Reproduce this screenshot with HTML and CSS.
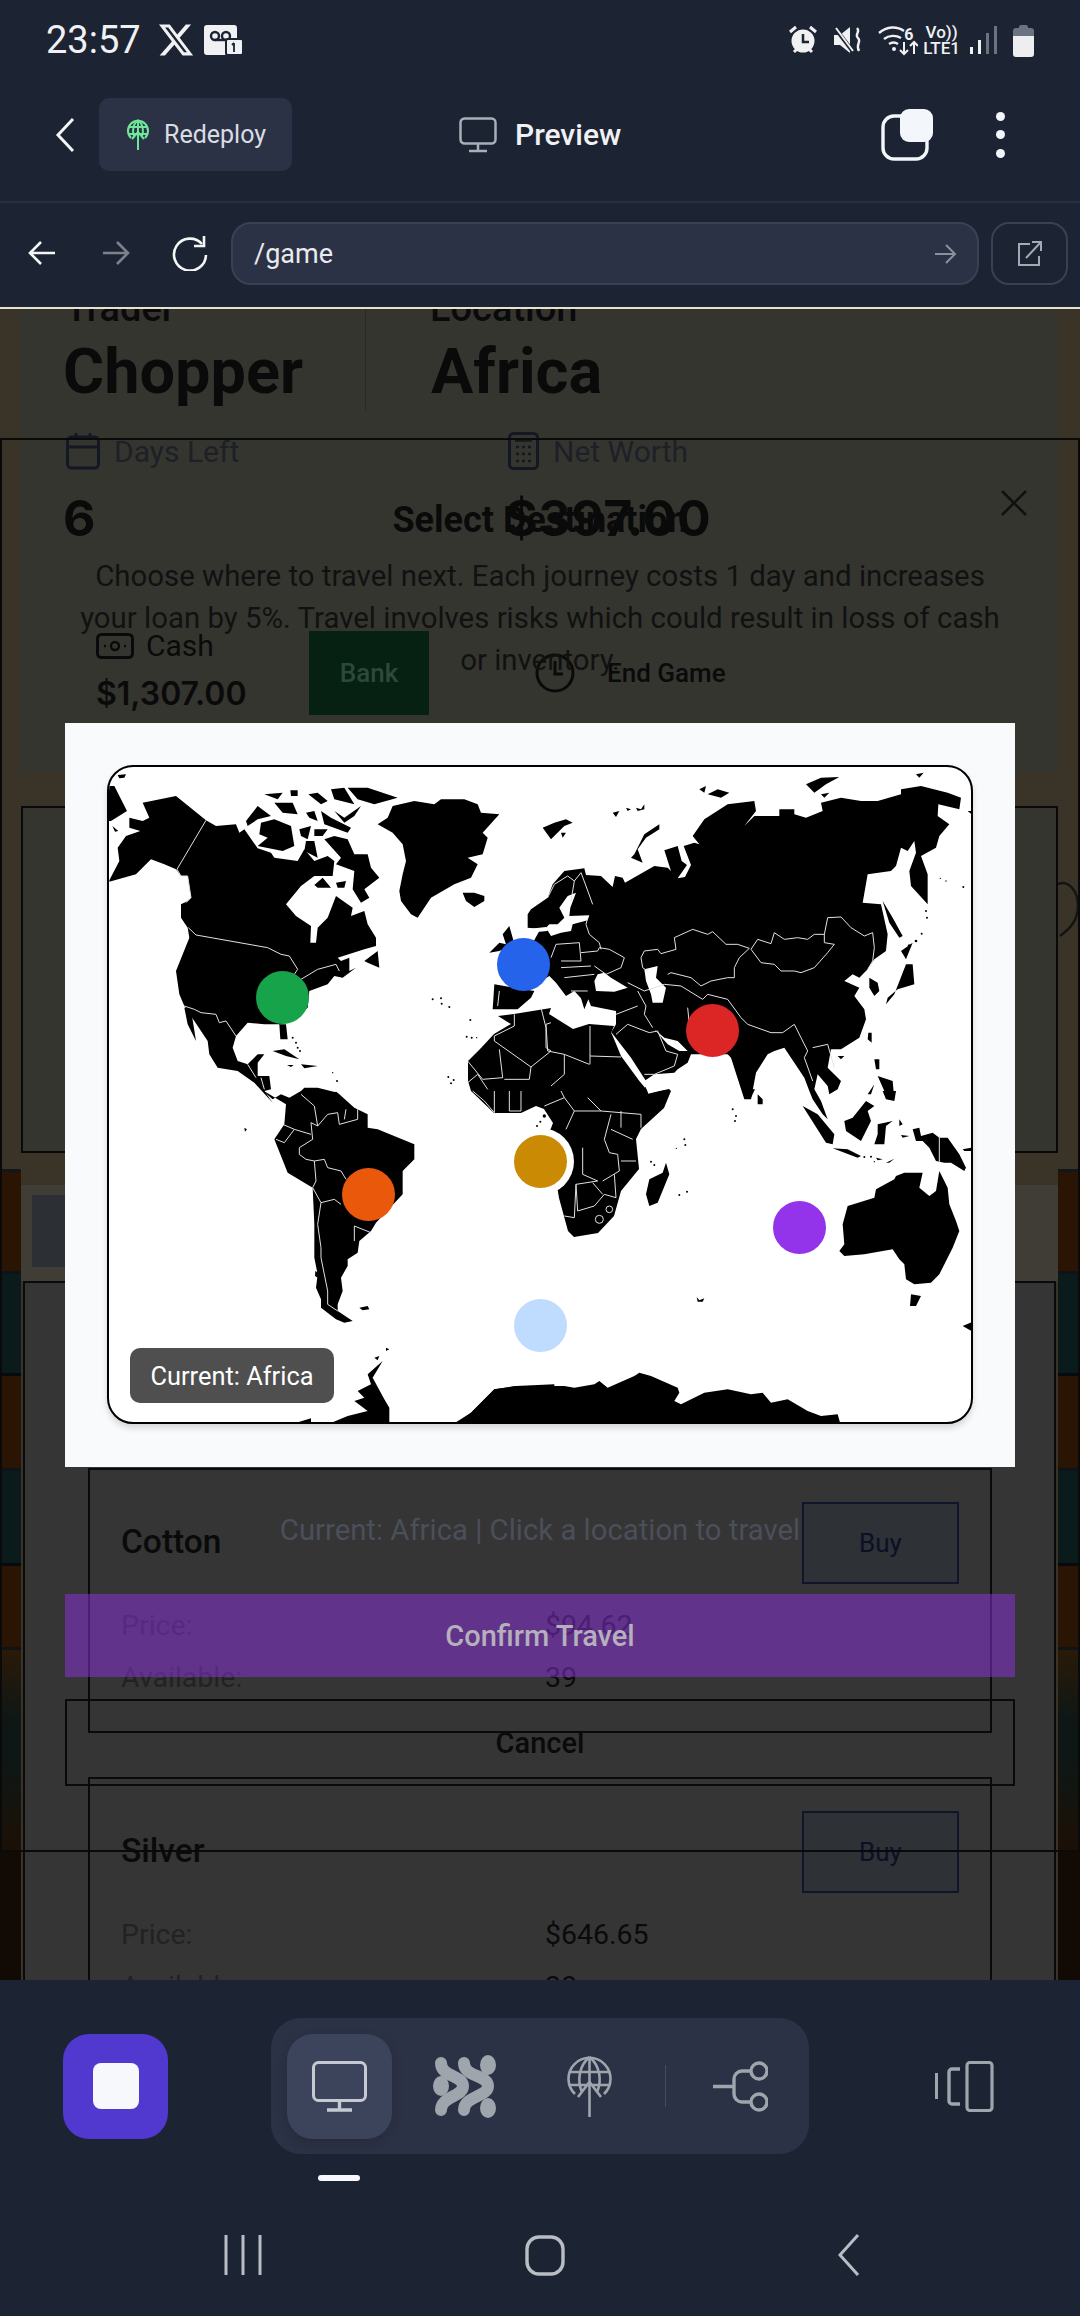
FILE: index.html
```html
<!DOCTYPE html>
<html lang="en">
<head>
    <meta charset="UTF-8">
    <title>Preview</title>
    <link rel="stylesheet" href="styles.css">
</head>
<body>
<div class="status">
    <span class="time">23:57</span>
    <svg class="x-logo" viewBox="0 0 24 24"><path d="M18.244 2.25h3.308l-7.227 8.26 8.502 11.24H16.17l-5.214-6.817L4.99 21.75H1.68l7.73-8.835L1.254 2.25H8.08l4.713 6.231zm-1.161 17.52h1.833L7.084 4.126H5.117z"/></svg>
    <svg class="vm" viewBox="0 0 39 30"><rect x="0" y="0" width="33" height="30" rx="3" fill="#f1f1f3"/><circle cx="11" cy="11" r="4" fill="none" stroke="#1c2333" stroke-width="2.4"/><circle cx="22" cy="11" r="4" fill="none" stroke="#1c2333" stroke-width="2.4"/><path d="M11 15h11" stroke="#1c2333" stroke-width="2.4"/><rect x="22" y="14" width="17" height="16" rx="2" fill="#f1f1f3" stroke="#1c2333" stroke-width="2"/><path d="M30 18v9M28 20l2-2" stroke="#1c2333" stroke-width="1.8" fill="none"/></svg>
    <div class="status-right">
        <svg class="st-alarm" viewBox="0 0 30 30"><circle cx="15" cy="16" r="11.5" fill="#f1f1f3"/><path d="M15 9v8h6" stroke="#1c2333" stroke-width="2.5" fill="none"/><path d="M2 7l6-5M28 7l-6-5M6 27l3-3M24 27l-3-3" stroke="#f1f1f3" stroke-width="3"/></svg>
        <svg class="st-mute" viewBox="0 0 30 30"><path d="M1 10h6l10-8v26L7 20H1z" fill="#f1f1f3"/><path d="M2 3l19 25" stroke="#1c2333" stroke-width="4"/><path d="M3 3l17 23" stroke="#f1f1f3" stroke-width="2"/><path d="M24 3c4 4-3 6 1 10s-3 6 1 13" stroke="#f1f1f3" stroke-width="2.4" fill="none"/></svg>
        <svg class="st-wifi" viewBox="0 0 40 32"><path d="M1 9c8-7 18-7 25-2M6 15c5-4 12-4 17-1M11 20c3-2 6-2 9 0" stroke="#f1f1f3" stroke-width="2.4" fill="none"/><circle cx="16" cy="25" r="2" fill="#f1f1f3"/><path d="M26 18v12M22 26l4 4 4-4M36 30V18M32 22l4-4 4 4" stroke="#f1f1f3" stroke-width="2" fill="none"/></svg>
        <span class="st-six">6</span>
        <span class="st-net"><span>Vo))</span><span>LTE1</span></span>
        <svg class="st-bars" viewBox="0 0 28 30"><rect x="0" y="22" width="3" height="7" fill="#f1f1f3"/><rect x="8" y="15" width="3" height="14" fill="#f1f1f3"/><rect x="16" y="8" width="3" height="21" fill="#6b7280"/><rect x="24" y="1" width="3" height="28" fill="#6b7280"/></svg>
        <svg class="st-batt" viewBox="0 0 21 33"><path d="M6 3a2 2 0 0 1 2-2h5a2 2 0 0 1 2 2v1h3a3 3 0 0 1 3 3v5H0V7a3 3 0 0 1 3-3h3z" fill="#6b7280"/><path d="M0 12h21v18a3 3 0 0 1-3 3H3a3 3 0 0 1-3-3z" fill="#eeeef0"/></svg>
    </div>
</div>

<div class="topbar">
    <svg class="chev" viewBox="0 0 20 36"><path d="M18 2L3 18l15 16" fill="none" stroke="#f4f5f7" stroke-width="3"/></svg>
    <div class="redeploy">
        <svg class="globe-green" viewBox="0 0 24 32"><path d="M5 19A10 10 0 1 1 19 19" fill="none" stroke="#6ee79a" stroke-width="2"/><path d="M2 8h20M3 15h18M12 1v30M12 1c-5 4-6 11-4 16M12 1c5 4 6 11 4 16M6 20l6-7 6 7" fill="none" stroke="#6ee79a" stroke-width="2"/></svg>
        <span>Redeploy</span>
    </div>
    <div class="preview">
        <svg class="mon" viewBox="0 0 38 36"><rect x="1.5" y="1.5" width="35" height="25" rx="4" fill="none" stroke="#a9afb8" stroke-width="2.5"/><path d="M19 27v7M10 34h18" stroke="#a9afb8" stroke-width="2.5"/></svg>
        <span>Preview</span>
    </div>
    <div class="top-right">
        <svg class="copy" viewBox="0 0 52 52"><rect x="2" y="7" width="44" height="43" rx="11" fill="none" stroke="#f3f6fb" stroke-width="3.4"/><rect x="19" y="0" width="33" height="33" rx="9" fill="#f3f6fb"/></svg>
        <div class="dots"><i></i><i></i><i></i></div>
    </div>
</div>

<div class="navbar">
    <svg class="arr a1" viewBox="0 0 28 26"><path d="M27 13H2M13 2L2 13l11 11" fill="none" stroke="#f4f5f7" stroke-width="2.6"/></svg>
    <svg class="arr a2" viewBox="0 0 28 26"><path d="M1 13h25M15 2l11 11-11 11" fill="none" stroke="#7d828d" stroke-width="2.6"/></svg>
    <svg class="reload" viewBox="0 0 38 36"><path d="M32 9a16 16 0 1 0 4 11" fill="none" stroke="#f4f5f7" stroke-width="2.6"/><path d="M34 1v10H24" fill="none" stroke="#f4f5f7" stroke-width="2.6"/></svg>
    <div class="url">
        <span>/game</span>
        <svg class="url-go" viewBox="0 0 22 22"><path d="M0 11h20M11 2l9 9-9 9" fill="none" stroke="#8b909b" stroke-width="2"/></svg>
    </div>
    <div class="ext">
        <svg viewBox="0 0 26 26"><path d="M13 4H2v21h20v-9" fill="none" stroke="#a4a9b2" stroke-width="2"/><path d="M9 18L24 2M15 2h9v9" fill="none" stroke="#a4a9b2" stroke-width="2"/></svg>
    </div>
</div>

<div class="stage">
    <div class="shelf">
        <i class="s-olive"></i><i class="s-brown h1"></i><i class="s-teal h2"></i><i class="s-brown h3"></i><i class="s-teal h4"></i><i class="s-brown h5"></i><i class="s-mix"></i><i class="s-last"></i>
    </div>

    <div class="page">
        <div class="card-main">
            <div class="head">
                <div class="head-a">
                    <div class="head-label">Trader</div>
                    <div class="head-val">Chopper</div>
                </div>
                <div class="head-b">
                    <div class="head-label">Location</div>
                    <div class="head-val">Africa</div>
                </div>
            </div>
            <div class="stats">
                <div>
                    <div class="stat-label">
                        <svg class="ic-cal" viewBox="0 0 34 38"><rect x="1.5" y="5" width="31" height="31" rx="4" fill="none" stroke="#141822" stroke-width="3"/><path d="M1 15h32M10 1v7M24 1v7" stroke="#141822" stroke-width="3"/></svg>
                        Days Left
                    </div>
                    <div class="stat-val">6</div>
                </div>
                <div>
                    <div class="stat-label">
                        <svg class="ic-calc" viewBox="0 0 31 38"><rect x="1.5" y="1.5" width="28" height="35" rx="4" fill="none" stroke="#141822" stroke-width="3"/><path d="M7 8h17" stroke="#141822" stroke-width="3.5"/><path d="M8 15h3M14 15h3M20 15h3M8 22h3M14 22h3M20 22h3M8 29h3M14 29h3M20 29h3" stroke="#141822" stroke-width="2.5"/></svg>
                        Net Worth
                    </div>
                    <div class="stat-val">$397.00</div>
                </div>
            </div>
            <div class="actions">
                <div class="cash">
                    <div class="cash-label">
                        <svg class="ic-cash" viewBox="0 0 38 26"><rect x="1.5" y="1.5" width="35" height="23" rx="4" fill="none" stroke="#0a0a0a" stroke-width="3"/><circle cx="19" cy="13" r="4" fill="none" stroke="#0a0a0a" stroke-width="2.4"/><path d="M8 13h2M28 13h2" stroke="#0a0a0a" stroke-width="2.4"/></svg>
                        Cash
                    </div>
                    <div class="cash-val">$1,307.00</div>
                </div>
                <div class="bank">Bank</div>
                <div class="endgame">
                    <svg class="ic-clock" viewBox="0 0 40 40"><circle cx="20" cy="20" r="18" fill="none" stroke="#0a0a0a" stroke-width="3"/><path d="M20 8v13h8" fill="none" stroke="#0a0a0a" stroke-width="3"/></svg>
                    End Game
                </div>
            </div>
        </div>

        <div class="card-mid"></div>

        <div class="band"><div class="band-in"></div></div>

        <div class="market">
            <div class="item">
                <div class="item-head">
                    <span class="item-name">Cotton</span>
                    <span class="buy">Buy</span>
                </div>
                <div class="item-rows">
                    <span class="k">Price:</span><span class="v">$94.62</span>
                    <span class="k">Available:</span><span class="v">39</span>
                </div>
            </div>
            <div class="item">
                <div class="item-head">
                    <span class="item-name">Silver</span>
                    <span class="buy">Buy</span>
                </div>
                <div class="item-rows">
                    <span class="k">Price:</span><span class="v">$646.65</span>
                    <span class="k">Available:</span><span class="v">38</span>
                </div>
            </div>
        </div>
    </div>

    <div class="shelf shelf-r">
        <i class="s-olive"></i><i class="s-brown h1"></i><i class="s-teal h2"></i><i class="s-brown h3"></i><i class="s-teal h4"></i><i class="s-brown h5"></i><i class="s-mix"></i><i class="s-last"></i>
    </div>

    <svg class="deco" viewBox="0 0 22 80"><path d="M0 14C10 10 20 20 20 36S10 60 2 66" fill="none" stroke="#141412" stroke-width="2.5"/></svg>

    <div class="modal">
        <svg class="close" viewBox="0 0 28 26"><path d="M2 1l24 24M26 1L2 25" fill="none" stroke="#111" stroke-width="2.6"/></svg>
        <h2 class="modal-title">Select Destination</h2>
        <p class="modal-desc">Choose where to travel next. Each journey costs 1 day and increases your loan by 5%. Travel involves risks which could result in loss of cash or inventory.</p>
        <div class="panel">
            <div class="map">
                <svg class="world" viewBox="108 766 864 657">
                    <g transform="translate(100 760) scale(.33333)">
                        <!-- north america -->
                        <path class="land" d="M22 75L40 75 78 150 30 180 22 180Z M50 42L75 40 70 50 55 52Z M34 195L52 210 42 212Z"/>
                        <path class="land" d="M125 125L225 105 315 178 345 195 405 190 415 215 430 205 470 262 510 275 520 290 590 300 610 265 640 300 680 285 700 300 695 345 640 345 600 375 555 430 585 465 630 495 628 545 645 545 650 500 680 470 705 405 755 440 750 465 790 450 800 490 825 530 825 555 790 565 710 590 720 600 745 590 745 630 765 620 725 650 700 645 680 670 625 690 620 740 560 785 535 790 538 835 560 835 555 790 490 790 440 785 405 825 395 860 410 900 440 910 470 880 490 880 470 905 470 945 505 945 510 985 490 990 515 1025 460 965 410 930 350 920 325 880 320 840 280 780 250 735 235 700 225 630 265 530 260 500 240 470 240 430 260 420 270 410 260 345 240 345 225 325 190 310 150 295 105 340 25 362 25 358 55 300 50 260 75 225 118 210 85 200 85 170 125 180 145 170Z"/>
                        <path class="land" d="M250 740L270 745 285 840 260 790Z M435 180L470 135 510 165 470 175 440 195Z M480 185L520 175 570 195 580 255 545 270 470 255 500 230 475 220Z M490 100L545 95 530 115Z M568 88L590 88 590 105 570 105Z M520 125L575 125 590 160 545 155Z M622 100L650 95 680 120 660 130Z M690 85L730 80 760 130 700 115Z M740 80L800 80 890 110 820 130 770 115Z M615 155L640 150 650 180 625 170Z M660 150L690 170 750 200 740 215 670 190Z M595 205L630 195 620 235 600 225Z M640 205L680 205 665 225 640 225Z M700 150L730 170 780 135 760 165 730 185Z M615 240L640 240 650 290 610 270Z M700 225L740 235 760 280 800 280 810 320 835 350 790 385 805 410 780 425 755 385 760 330 705 310 720 290 670 235Z M640 372L665 350 690 380 650 380Z M705 365L735 360 730 380 710 380Z M790 600L830 570 835 620 800 605Z"/>
                        <path class="land" d="M830 190L860 170 875 135 940 120 1000 130 1020 115 1090 115 1130 130 1140 155 1195 160 1145 215 1160 230 1145 280 1100 290 1130 310 1110 350 1060 370 990 410 950 470 930 460 900 420 895 390 905 340 915 300 905 250 875 215Z M1085 395L1120 395 1150 405 1150 420 1120 438 1095 420Z M1165 575L1195 545 1215 550 1205 520 1225 495 1235 530 1240 550 1195 570Z M1180 670L1300 690 1290 710 1250 745 1175 745Z"/>
                        <path class="land" d="M515 870L550 865 595 895 555 885Z M600 910L650 915 610 922Z M558 912L578 912 570 918Z"/>
                        <g class="dots-land"><circle cx="995" cy="715" r="3"/><circle cx="1020" cy="712" r="3"/><circle cx="1022" cy="728" r="3"/><circle cx="1045" cy="738" r="3"/><circle cx="1108" cy="777" r="3"/><circle cx="1097" cy="827" r="3"/><circle cx="1112" cy="830" r="3"/><circle cx="1127" cy="830" r="2"/><circle cx="1042" cy="948" r="3"/><circle cx="1058" cy="957" r="3"/><circle cx="1050" cy="967" r="3"/><circle cx="575" cy="830" r="3"/><circle cx="585" cy="845" r="3"/><circle cx="590" cy="860" r="3"/><circle cx="597" cy="870" r="3"/><circle cx="695" cy="935" r="2"/><circle cx="708" cy="960" r="3"/><circle cx="705" cy="995" r="3"/></g>
                        <path class="bd" d="M315 178L228 325 240 345 260 345 270 410 255 425M262 500L285 522 500 560 540 580 565 585 590 625 580 640M600 655L650 625 705 610 715 630M250 735L280 745 300 755 345 760 355 785 375 780 405 825M1195 690L1190 735M440 910L465 950M480 950L490 985"/>
                    </g>
                    <g>
                        <!-- africa, screen units -->
                        <path class="land" d="M497 1015L513 1013 550 1007 548 1013 572 1028 588 1023 613 1025 610 1032 630 1062 648 1092 668 1088 670 1090 663 1107 640 1128 635 1138 638 1168 620 1190 613 1215 597 1232 573 1236 567 1230 558 1197 556 1185 545 1165 545 1140 552 1122 543 1108 535 1105 520 1112 493 1112 470 1090 467 1080 467 1060 480 1047 493 1033 510 1023Z"/>
                    </g>
                    <g transform="translate(100 760) scale(.33333)">
                        <path class="bd" d="M1180 825L1240 795 1240 760M1180 825L1180 840 1290 918 1350 870M1195 865L1205 950 1145 955 1100 900M1290 918L1285 955 1210 955M1100 965L1130 940 1160 985M1320 740L1335 800 1335 860 1350 870"/>
                    </g>
                    <g transform="translate(530 760) scale(.33333)">
                        <!-- eurasia -->
                        <path class="land" d="M165 342L210 345 245 378 252 345 275 350 282 365 370 315 410 320 420 330 400 268 440 255 452 300 468 312 440 352 462 348 480 312 458 255 490 245 505 250 485 225 520 175 590 130 670 120 675 150 640 195 670 165 745 165 745 145 790 145 790 160 825 170 875 150 870 125 930 110 990 120 1040 120 1110 100 1110 85 1170 75 1250 95 1290 110 1285 145 1222 130 1220 165 1255 190 1225 225 1215 260 1170 285 1190 340 1190 430 1140 375 1135 330 1155 275 1150 240 1130 270 1110 260 1095 315 1080 330 1010 340 995 425 1050 430 1070 520 1065 570 1030 595 1010 625 985 650 965 640 940 660 985 680 970 705 1000 745 1005 775 985 830 930 865 900 865 890 920 930 960 920 985 895 1000 890 975 860 940 850 985 870 1020 890 1075 875 1060 845 1015 835 990 820 950 800 920 780 890 760 860 730 870 710 880 675 935 660 1015 640 1015 600 890 590 880 480 880 470 905 440 925 430 935 370 940 340 960 300 905 240 815 255 790 255 750 180 735 172 715 160 745 150 712 130 690 105 705 75 665 55 645 30 660 -20 640 -20 580 0 555 25 510 35 505 -10 500 -10 460 0 445 50 410 65 370 100 330 160 322Z"/>
                        <path class="sea" d="M85 440L110 405 135 395 118 440 115 465 175 463 170 478 125 490 120 510 90 515 60 525 45 500 55 490 80 490 100 470Z M-15 505L45 498 50 510 -10 515Z M190 660L200 640 220 635 240 650 290 680 250 692 195 690Z M340 625L380 615 375 650 405 680 395 725 365 725 360 700 345 660Z M370 805L400 830 440 840 470 870 445 870 410 850Z M240 812L300 890 345 960 342 980 325 960 270 885Z M340 965L440 935 440 975 352 998Z"/>
                        <path class="land" d="M310 280L340 220 385 190 385 205 345 230 320 265 335 305 300 290Z M35 200L70 185 105 175 125 185 100 195 60 235Z M90 215L105 215 95 230Z M245 155L265 150 255 168Z M285 140L300 145 290 150Z M315 140L330 145 340 130 340 145 320 150Z M505 85L525 75 520 95Z M530 100L560 85 595 95 570 110Z M825 70L870 50 925 48 885 70 850 95Z M870 100L895 95 880 110Z M1155 40L1178 35 1165 50Z M1310 150L1325 150 1320 158Z M1055 420L1085 470 1115 525 1105 530 1075 485Z M1110 570L1145 545 1125 595Z M1125 610L1145 610 1150 670 1100 685 1070 710 1065 730 1090 700Z M1015 650L1040 665 1045 690 1030 705 1015 680Z M1012 815L1022 815 1022 845 1010 835Z M920 885L940 885 930 895Z M1030 895L1045 895 1045 925 1035 925Z M1040 945L1085 960 1090 1015 1060 990Z M1010 1000L1030 970 1020 1000Z"/>
                        <g class="dots-land"><circle cx="1185" cy="450" r="3"/><circle cx="1188" cy="470" r="3"/><circle cx="1172" cy="518" r="3"/><circle cx="1155" cy="540" r="4"/><circle cx="1135" cy="555" r="5"/><circle cx="1228" cy="352" r="2"/><circle cx="1245" cy="360" r="2"/><circle cx="1297" cy="378" r="3"/></g>
                        <path class="bd" d="M330 590L340 570 380 565 390 578 435 565 430 530 485 505 530 520 545 512 585 550 620 550 655 562 625 590 610 620 610 650M330 590L335 620 350 630M660 565L680 535 720 548 730 515 760 535 800 530 830 535 850 520 880 520 890 470 930 468 960 500 1000 525 1025 515 1030 560 1025 600 1010 625M660 565L690 605 730 610 750 630 790 630 810 635 850 620 890 575 910 550 880 545 880 520M410 640L420 635 480 650 510 675 540 660 590 650 610 650M290 665L340 690 400 670 450 675 515 715 530 700 590 715 630 770 650 790 720 815 755 815 790 790 810 830 830 870 820 890 845 960M320 690L345 735 340 760 365 800M845 860L890 850 910 920M255 760L320 735M255 820L290 790 355 815 380 810 405 870 440 880M340 940L370 940 430 915 440 880M470 740L475 790M150 575L200 570 205 560 235 565 280 590 270 620 225 640 190 615M170 470L165 490 175 520 205 545 210 565M75 550L145 545 150 600 90 600M60 590L75 550M90 620L180 615M100 650L190 640M120 690L170 690M50 410L70 370 110 345 130 360 150 335 165 375 185 430M130 360L120 420M177 795L177 885 270 888M177 885L177 910M45 790L60 785M45 790L50 870 100 880 175 910M100 880L100 940 60 975"/>
                    </g>
                    <g transform="translate(100 1090) scale(.33333)">
                        <!-- south america -->
                        <path class="land" d="M480 -5L515 25 540 10 565 20 600 0 610 -10 650 -10 710 5 760 50 800 70 800 110 830 115 940 160 940 205 905 240 905 310 825 395 810 420 775 450 770 485 740 505 740 525 720 560 725 600 710 640 710 660 755 690 730 695 705 685 660 650 660 625 645 590 650 550 640 500 640 400 635 290 560 245 520 145 550 100 555 40 530 25Z"/>
                        <path class="land" d="M775 650L800 645 805 655 785 658Z M430 110L438 115 432 122Z M643 540L652 545 650 560 642 555Z M680 1000L740 975 800 960 760 930 790 920 770 900 810 880 800 850 845 810 815 860 850 925 865 950 865 1000Z M580 997L630 982 630 1000Z M820 800L835 795 830 808Z M855 770L865 775 855 780Z M1055 1000L1110 965 1180 895 1245 885 1360 880 1360 1000Z"/>
                        <g class="dots-land"><circle cx="1330" cy="75" r="5"/><circle cx="1318" cy="92" r="3"/><circle cx="1308" cy="105" r="3"/></g>
                        <path class="bd" d="M600 10L640 45 650 105 630 95 635 145 595 170 595 190 615 205 640 210 670 205 680 230 720 240 735 265M640 210L645 270 635 290 660 335M660 335L700 325 720 340M660 335L650 400 660 470 660 500 680 600 680 640 710 660M525 145L550 155 580 115 545 100M580 115L630 130M650 105L680 70 710 65 715 100 770 85 770 55M735 55L730 85M760 405L810 425M760 405L760 450M1115 0L1150 30 1180 65M1180 0L1180 65M1225 0L1225 60 1260 60 1260 0"/>
                    </g>
                    <g transform="translate(530 1090) scale(.33333)">
                        <!-- indian ocean side -->
                        <path class="land" d="M405 215L415 250 380 335 355 345 345 310 355 265 395 245Z M680 10L695 25 695 40 680 40Z M640 -5L660 20 672 -5Z"/>
                        <path class="land" d="M925 480L940 460 935 400 950 345 1030 320 1035 295 1090 265 1095 255 1120 245 1175 245 1165 290 1195 315 1215 300 1225 240 1250 290 1255 340 1275 390 1285 420 1265 470 1225 550 1200 575 1150 580 1125 565 1120 520 1105 505 1085 475 1000 490 940 495Z M1140 610L1170 615 1155 645 1137 645Z M1295 705L1330 690 1330 725Z M497 618L505 628 520 622 515 632 500 632Z"/>
                        <path class="land" d="M1145 115L1165 110 1170 135 1205 125 1225 140 1250 140 1285 190 1305 230 1300 240 1260 215 1240 215 1215 210 1195 170 1175 150 1155 150Z M815 45L860 70 910 130 905 160 885 155Z M905 172L950 175 990 195 980 200Z M1005 30L1030 45 1010 60 1020 90 990 150 945 120 940 90 965 80Z M1040 100L1085 90 1065 105 1060 160 1030 160 1040 130Z M1105 85L1115 100 1105 105Z M1295 175L1320 170 1320 150 1330 180 1300 180Z M1065 215L1090 203 1075 215Z M1035 200L1055 205 1040 208Z M1055 0L1095 0 1090 30 1065 25Z M1110 132L1135 135 1115 140Z"/>
                        <g class="dots-land"><circle cx="605" cy="55" r="3"/><circle cx="615" cy="75" r="3"/><circle cx="612" cy="90" r="3"/><circle cx="460" cy="145" r="3"/><circle cx="463" cy="162" r="3"/><circle cx="436" cy="172" r="2"/><circle cx="360" cy="212" r="3"/><circle cx="370" cy="222" r="3"/><circle cx="445" cy="312" r="3"/><circle cx="468" cy="302" r="3"/><circle cx="1000" cy="198" r="3"/><circle cx="1020" cy="197" r="3"/><circle cx="1030" cy="212" r="2"/></g>
                        <path class="land" d="M-235 1005L-180 965 -110 895 -45 885 0 885 100 885 130 890 190 880 205 870 230 890 310 855 325 845 360 855 440 890 445 905 430 930 450 940 520 905 590 895 660 910 695 905 720 935 770 925 830 960 870 975 920 970 930 1005Z"/>
                        <path class="bd" d="M40 45L100 20 130 60 210 60 270 65 330 70 330 110M100 20L90 0M210 60L170 20M270 60L270 110M240 70L220 145 235 185 260 190 265 240 215 270M130 60L105 115M240 115L305 145M315 210L270 210M155 170L155 250 200 270M250 250L255 320 220 310 190 345 140 360 135 280 200 270M135 280L130 380 100 375M215 310L185 275"/>
                        <circle class="bd" cx="205" cy="385" r="12"/>
                        <circle class="bd" cx="235" cy="355" r="10"/>
                        <path class="bd" d="M1225 135L1225 215"/>
                    </g>
                </svg>
                <i class="pin pin-us"></i>
                <i class="pin pin-eu"></i>
                <i class="pin pin-in"></i>
                <i class="pin pin-br"></i>
                <i class="pin pin-af"></i>
                <i class="pin pin-au"></i>
                <i class="pin pin-sp"></i>
                <div class="badge">Current: Africa</div>
            </div>
        </div>
        <div class="hint">Current: Africa | Click a location to travel</div>
        <div class="btn-confirm">Confirm Travel</div>
        <div class="btn-cancel">Cancel</div>
    </div>
</div>

<div class="bottom">
    <div class="tools">
        <div class="stop"><i></i></div>
        <div class="group">
            <div class="tool tool-on">
                <svg class="t-mon" viewBox="0 0 55 51"><rect x="1.5" y="1.5" width="52" height="38" rx="5" fill="none" stroke="#c5cad2" stroke-width="3"/><path d="M27.5 40v9M15 49h25" stroke="#c5cad2" stroke-width="3.4"/></svg>
            </div>
            <div class="tool">
                <svg class="t-blob" viewBox="0 0 63 63" fill="#9fa5ac"><ellipse cx="55" cy="10" rx="8" ry="10"/><ellipse cx="8" cy="31" rx="8" ry="10"/><ellipse cx="55" cy="53" rx="8" ry="10"/><path d="M8 8C8 22 30 20 30 31S8 41 8 55M31 8C31 22 55 20 55 31S31 41 31 55" fill="none" stroke="#9fa5ac" stroke-width="12" stroke-linecap="round"/></svg>
            </div>
            <div class="tool">
                <svg class="t-glob" viewBox="0 0 45 62"><path d="M8 39A21 21 0 1 1 37 39" fill="none" stroke="#9fa5ac" stroke-width="2.6"/><path d="M2 17h41M3 30h39M22.5 2v60M22.5 2c-11 9-12 24-8 34M22.5 2c11 9 12 24 8 34M11 42l11.5-15 11.5 15" fill="none" stroke="#9fa5ac" stroke-width="2.6"/></svg>
            </div>
            <i class="tool-sep"></i>
            <div class="tool tool-last">
                <svg class="t-branch" viewBox="0 0 55 51"><circle cx="46" cy="10" r="8" fill="none" stroke="#9fa5ac" stroke-width="3.4"/><circle cx="46" cy="41" r="8" fill="none" stroke="#9fa5ac" stroke-width="3.4"/><path d="M0 25.5h21M38 10H29a8 8 0 0 0-8 8v15a8 8 0 0 0 8 8h9" fill="none" stroke="#9fa5ac" stroke-width="3.4"/></svg>
            </div>
        </div>
        <svg class="t-side" viewBox="0 0 59 51"><path d="M1.5 12v26" stroke="#9fa5ac" stroke-width="3"/><path d="M25 8h-8a3 3 0 0 0-3 3v29a3 3 0 0 0 3 3h8" fill="none" stroke="#9fa5ac" stroke-width="3.4"/><rect x="32" y="1.5" width="25" height="48" rx="3" fill="none" stroke="#9fa5ac" stroke-width="3.2"/></svg>
    </div>
    <div class="tab-pill"></div>
    <div class="sysnav">
        <svg class="n-recent" viewBox="0 0 38 40"><path d="M2 0v40M19 0v40M36 0v40" stroke="#b9bdc4" stroke-width="3"/></svg>
        <svg class="n-home" viewBox="0 0 40 41"><rect x="2" y="2" width="36" height="37" rx="12" fill="none" stroke="#b9bdc4" stroke-width="3.4"/></svg>
        <svg class="n-back" viewBox="0 0 22 42"><path d="M20 1L2 21l18 20" fill="none" stroke="#b9bdc4" stroke-width="3"/></svg>
    </div>
</div>
</body>
</html>
```

FILE: styles.css
```css
*{
    margin: 0;
    padding: 0;
    box-sizing: border-box;
}
body{
    width: 1080px;
    height: 2316px;
    overflow: hidden;
    background: #1c2333;
    font-family: Roboto, "Liberation Sans", sans-serif;
    display: flex;
    flex-direction: column;
}
svg{
    display: block;
    flex: none;
}

/* status bar */
.status{
    height: 68px;
    display: flex;
    align-items: center;
    padding: 0 46px;
    color: #f1f1f3;
}
.time{
    font-size: 38px;
    width: 96px;
    margin-top: 12px;
}
.x-logo{
    width: 38px;
    height: 38px;
    fill: #f1f1f3;
    margin: 12px 0 0 15px;
}
.vm{
    width: 39px;
    height: 30px;
    margin: 12px 0 0 9px;
}
.status-right{
    margin-left: auto;
    display: flex;
    align-items: center;
    margin-top: 12px;
}
.st-alarm{ width: 30px; height: 30px; }
.st-mute{ width: 30px; height: 30px; margin-left: 15px; }
.st-wifi{ width: 40px; height: 32px; margin-left: 15px; }
.st-six{
    font-size: 16px;
    font-weight: 700;
    width: 0;
    margin: -12px 0 0 -14px;
    padding-right: 14px;
}
.st-net{
    display: flex;
    flex-direction: column;
    align-items: center;
    font-size: 17px;
    line-height: 16px;
    margin-left: 5px;
    font-weight: 500;
}
.st-bars{ width: 28px; height: 30px; margin-left: 10px; }
.st-batt{ width: 21px; height: 33px; margin-left: 15px; }

/* top bar */
.topbar{
    height: 135px;
    display: flex;
    align-items: center;
    padding-left: 55px;
    border-bottom: 2px solid #262e3f;
}
.chev{
    width: 20px;
    height: 36px;
}
.redeploy{
    margin-left: 24px;
    width: 193px;
    height: 73px;
    border-radius: 10px;
    background: #2c3245;
    display: flex;
    align-items: center;
    gap: 14px;
    padding-left: 27px;
    font-size: 25px;
    color: #d9dce3;
}
.globe-green{
    width: 24px;
    height: 32px;
}
.preview{
    margin-left: 167px;
    display: flex;
    align-items: center;
    gap: 18px;
    font-size: 30px;
    font-weight: 500;
    color: #f0f1f3;
}
.mon{
    width: 38px;
    height: 36px;
}
.top-right{
    margin-left: auto;
    display: flex;
    align-items: center;
    padding-right: 75px;
}
.copy{
    width: 52px;
    height: 52px;
    margin-right: 63px;
}
.dots{
    display: flex;
    flex-direction: column;
    gap: 9.5px;
}
.dots i{
    width: 9px;
    height: 9px;
    border-radius: 50%;
    background: #f3f6fb;
}

/* url row */
.navbar{
    height: 106px;
    display: flex;
    align-items: center;
    padding: 0 0 4px 28px;
    border-bottom: 2px solid #e6e2cf;
}
.arr{
    width: 28px;
    height: 26px;
}
.a2{ margin-left: 46px; }
.reload{
    width: 38px;
    height: 36px;
    margin-left: 40px;
}
.url{
    margin-left: 23px;
    width: 748px;
    height: 63px;
    border-radius: 20px;
    background: #2c3245;
    border: 2px solid #3a4155;
    display: flex;
    align-items: center;
    justify-content: space-between;
    padding: 2px 20px 0 21px;
    font-size: 27px;
    color: #e8eaee;
}
.url-go{
    width: 22px;
    height: 22px;
}
.ext{
    margin-left: 12px;
    width: 77px;
    height: 63px;
    border-radius: 18px;
    border: 2px solid #3a4155;
    display: flex;
    align-items: center;
    justify-content: center;
}
.ext svg{
    width: 26px;
    height: 26px;
}

/* dimmed page behind the dialog */
.stage{
    position: relative;
    height: 1671px;
    overflow: hidden;
    display: flex;
    color: #0a0a0a;
    background: #3a3328;
}
.deco{
    position: absolute;
    left: 1058px;
    top: 561px;
    width: 22px;
    height: 80px;
}
.shelf{
    width: 21px;
    flex: none;
    display: flex;
    flex-direction: column;
}
.shelf-r{ width: 22px; }
.shelf i{ display: block; }
.s-olive{ height: 864px; background: #3a3328; border-bottom: 3px solid #14161a; }
.s-brown{ background: #2a1505; border-bottom: 3px solid #0c1418; }
.s-teal{ background: #0b1a1a; border-bottom: 3px solid #060a0c; }
.h1{ height: 102px; }
.h2{ height: 102px; }
.h3{ height: 95px; }
.h4{ height: 95px; }
.h5{ height: 84px; }
.s-mix{ height: 200px; background: linear-gradient(#2a1a08, #0e1715 35%, #0e1715 55%, #1c1006); }
.s-last{ height: 130px; background: #120a04; }

.page{
    flex: 1;
    min-width: 0;
}
.card-main{
    display: flow-root;
    height: 462px;
    background: #353530;
    padding-left: 42px;
}
.head{
    display: flex;
    margin-top: -21px;
}
.head-a{
    width: 303px;
    height: 123px;
    border-right: 1px solid #2a2a27;
}
.head-b{
    padding-left: 62px;
}
.head-label{
    font-size: 38px;
    font-weight: 500;
    line-height: 40px;
    padding-left: 2px;
}
.head-val{
    font-size: 63px;
    font-weight: 700;
    line-height: 70px;
    margin-top: 9px;
}
.head-b .head-val{
    margin-left: 3px;
}
.stats{
    display: grid;
    grid-template-columns: 442px 1fr;
    margin-top: 20px;
}
.stat-label{
    display: flex;
    align-items: center;
    gap: 14px;
    height: 40px;
    font-size: 30px;
    color: #1d2026;
    padding-left: 3px;
}
.ic-cal{ width: 34px; height: 38px; }
.ic-calc{ width: 31px; height: 38px; }
.stat-val{
    font-family: Inter, Roboto, sans-serif;
    font-size: 50px;
    font-weight: 700;
    line-height: 56px;
    letter-spacing: .6px;
    margin-top: 19px;
}
.actions{
    display: flex;
    align-items: flex-start;
    margin-top: 85px;
    padding-left: 33px;
}
.cash{
    width: 213px;
}
.cash-label{
    display: flex;
    align-items: center;
    gap: 12px;
    font-size: 30px;
    line-height: 30px;
}
.ic-cash{ width: 38px; height: 26px; }
.cash-val{
    font-family: Inter, Roboto, sans-serif;
    font-size: 32px;
    font-weight: 600;
    line-height: 38px;
    margin-top: 14px;
}
.bank{
    width: 120px;
    height: 84px;
    background: #062012;
    color: #2c4a38;
    font-size: 26px;
    font-weight: 500;
    display: flex;
    align-items: center;
    justify-content: center;
}
.endgame{
    display: flex;
    align-items: center;
    gap: 32px;
    margin: 22px 0 0 106px;
    font-size: 26px;
    font-weight: 500;
}
.ic-clock{ width: 40px; height: 40px; }

.card-mid{
    height: 347px;
    margin-top: 35px;
    background: #353530;
    border: 2px solid #0a0a0a;
}
.band{
    height: 96px;
    margin-top: 32px;
    background: #403c36;
    padding: 10px 0 14px 11px;
}
.band-in{
    height: 100%;
    width: 600px;
    background: #2c2f33;
}
.market{
    margin: 0 2px;
    height: 760px;
    background: #353535;
    border: 2px solid #0a0a0a;
    padding: 185px 62px 0 63px;
}
.item{
    height: 265px;
    border: 2px solid #0a0a0a;
    margin-bottom: 44px;
}
.item-head{
    height: 146px;
    display: flex;
    align-items: center;
    justify-content: space-between;
    padding: 0 31px;
}
.item-name{
    font-size: 33.5px;
    font-weight: 500;
    margin-top: -3px;
}
.buy{
    width: 157px;
    height: 82px;
    border: 2px solid #10152b;
    background: #2e3136;
    color: #0c1026;
    font-size: 26px;
    display: flex;
    align-items: center;
    justify-content: center;
}
.item-rows{
    display: grid;
    grid-template-columns: 424px 1fr;
    grid-auto-rows: 52px;
    padding: 0 31px;
    font-size: 28.5px;
    line-height: 52px;
    margin-top: -16px;
}
.k{ color: #222; }
.v{ color: #0a0a0a; }

/* dialog */
.modal{
    position: absolute;
    left: 0;
    top: 129px;
    width: 1080px;
    height: 1414px;
    border: 2px solid #0a0a0a;
    padding: 58px 63px 0;
    text-align: center;
}
.close{
    position: absolute;
    left: 998px;
    top: 50px;
    width: 28px;
    height: 26px;
}
.modal-title{
    font-size: 36px;
    font-weight: 700;
    line-height: 44px;
}
.modal-desc{
    margin-top: 13px;
    font-size: 29.4px;
    line-height: 42px;
    color: #111;
}
.panel{
    margin-top: 42px;
    height: 744px;
    background: #f9fafb;
    padding: 42px 42px 0;
}
.map{
    position: relative;
    height: 659px;
    background: #fff;
    border: 2px solid #000;
    border-radius: 26px;
    overflow: hidden;
    box-shadow: 0 4px 6px rgba(0, 0, 0, .15);
    text-align: left;
}
.world{
    width: 864px;
    height: 657px;
}
.land{ fill: #000; }
.sea{ fill: #fff; }
.dots-land{ fill: #000; }
.bd{
    fill: none;
    stroke: #e2e2e2;
    stroke-width: 3;
}
.pin{
    position: absolute;
    width: 53px;
    height: 53px;
    border-radius: 50%;
}
.pin-us{ left: 147px; top: 204px; background: #16a34a; }
.pin-eu{ left: 388px; top: 171px; background: #2563eb; }
.pin-in{ left: 577px; top: 237px; background: #dc2626; }
.pin-br{ left: 233px; top: 401px; background: #ea580c; }
.pin-af{
    left: 405px;
    top: 368px;
    background: #ca8a04;
    box-shadow: 0 0 0 7px #fff;
}
.pin-au{ left: 664px; top: 434px; background: #9333ea; }
.pin-sp{ left: 405px; top: 532px; background: #bfdbfe; }
.badge{
    position: absolute;
    left: 21px;
    top: 581px;
    width: 204px;
    height: 55px;
    border-radius: 10px;
    background: #4f4f4f;
    color: #fff;
    font-size: 25.4px;
    display: flex;
    align-items: center;
    justify-content: center;
}
.hint{
    margin-top: 43px;
    font-size: 29.3px;
    line-height: 40px;
    color: #4a4f5a;
}
.btn-confirm{
    margin-top: 44px;
    height: 83px;
    background: rgba(147, 51, 234, .48);
    color: #b5b0bb;
    font-size: 29px;
    font-weight: 500;
    display: flex;
    align-items: center;
    justify-content: center;
}
.btn-cancel{
    margin-top: 22px;
    height: 87px;
    border: 2px solid #0a0a0a;
    font-size: 29px;
    font-weight: 500;
    display: flex;
    align-items: center;
    justify-content: center;
}

/* bottom toolbar */
.bottom{
    position: relative;
    flex: 1;
    background: #1c2333;
    padding-top: 38px;
}
.tools{
    display: flex;
    align-items: center;
    height: 136px;
    padding-left: 63px;
}
.stop{
    width: 105px;
    height: 105px;
    border-radius: 26px;
    background: #5138cf;
    display: flex;
    align-items: center;
    justify-content: center;
}
.stop i{
    width: 46px;
    height: 46px;
    border-radius: 8px;
    background: #f6f8fc;
}
.group{
    margin-left: 103px;
    width: 538px;
    height: 136px;
    border-radius: 30px;
    background: #2c3245;
    display: flex;
    align-items: center;
    padding-left: 16px;
}
.tool{
    width: 105px;
    height: 105px;
    border-radius: 26px;
    display: flex;
    align-items: center;
    justify-content: center;
    margin-right: 20px;
}
.tool-last{ margin-right: 0; }
.tool-on{
    background: #3c445c;
    box-shadow: 0 4px 12px rgba(0, 0, 0, .15);
}
.tool-sep{
    width: 1px;
    height: 42px;
    background: #444b60;
    margin: 0 22px 0 3px;
}
.t-mon{ width: 55px; height: 51px; }
.t-blob{ width: 63px; height: 63px; }
.t-glob{ width: 45px; height: 62px; }
.t-branch{ width: 55px; height: 51px; }
.t-side{
    width: 59px;
    height: 51px;
    margin-left: 126px;
}
.tab-pill{
    width: 42px;
    height: 6px;
    border-radius: 3px;
    background: #f6f8fc;
    margin: 21px 0 0 318px;
}
.sysnav{
    display: flex;
    align-items: center;
    margin-top: 53px;
    padding-left: 224px;
}
.n-recent{ width: 38px; height: 40px; }
.n-home{ width: 40px; height: 41px; margin-left: 263px; }
.n-back{ width: 22px; height: 42px; margin-left: 273px; }
```
